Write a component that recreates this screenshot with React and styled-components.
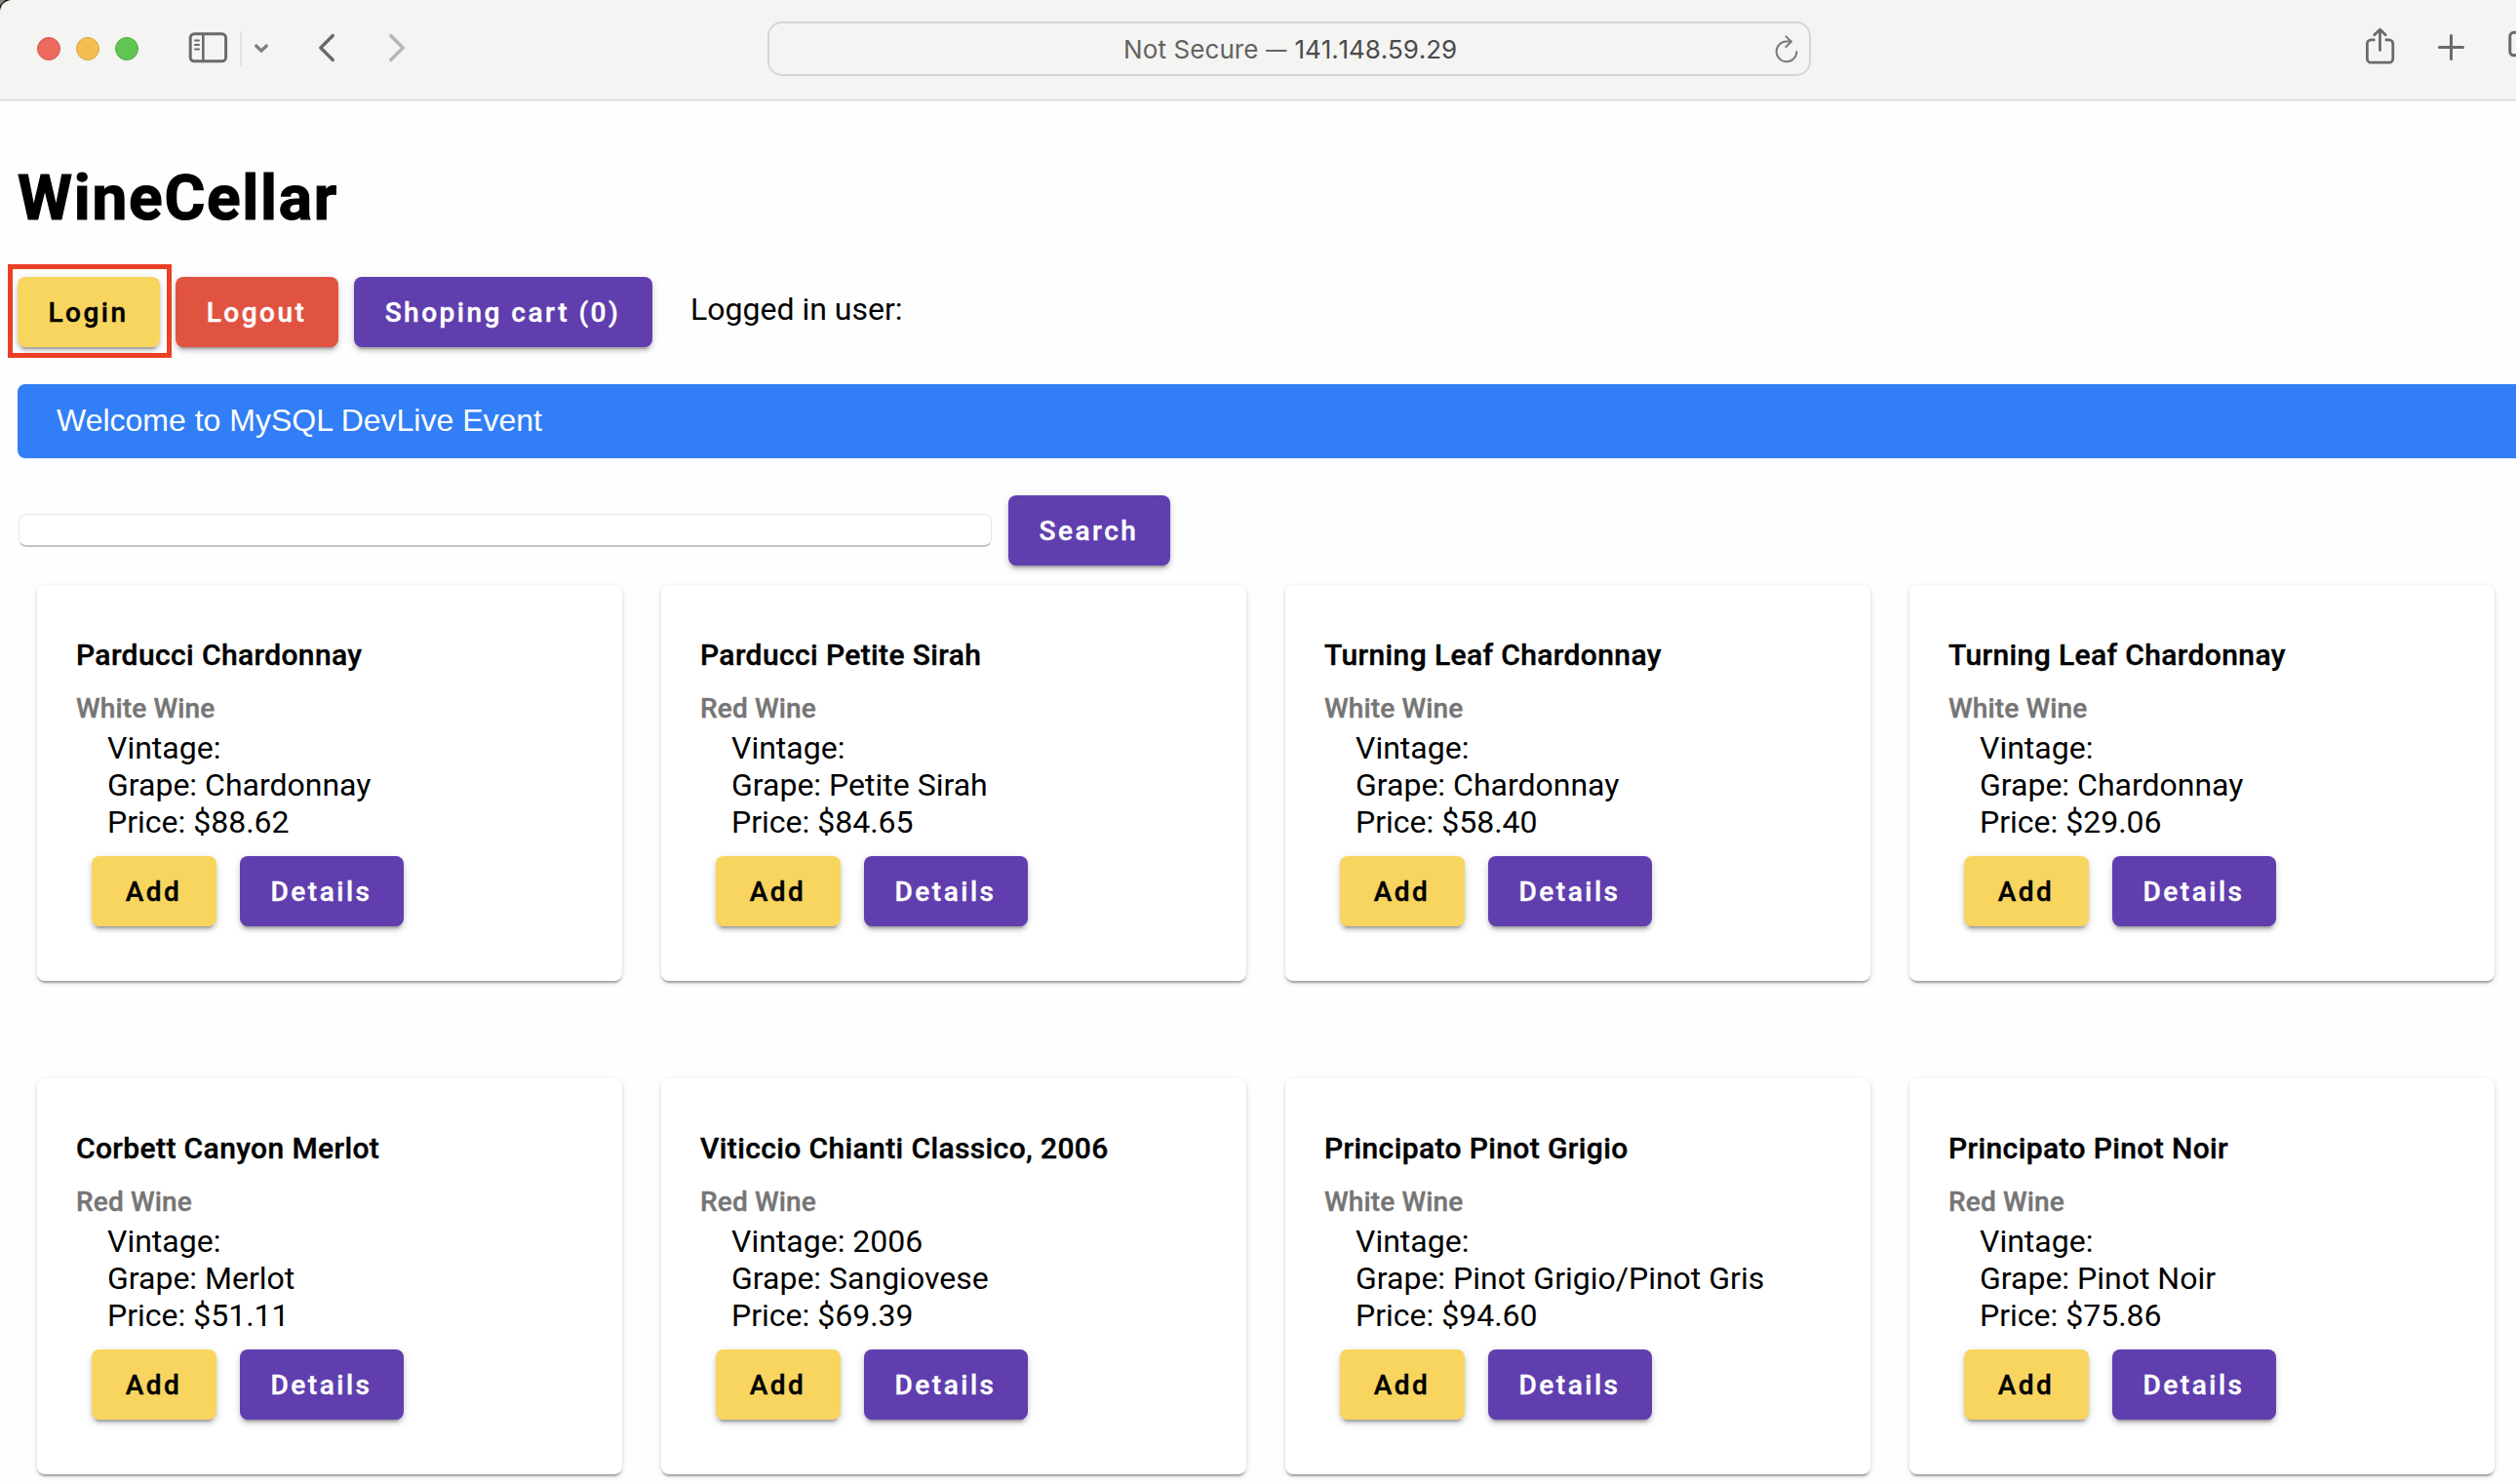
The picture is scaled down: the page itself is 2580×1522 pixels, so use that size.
import React from "react";
import styled, { createGlobalStyle } from "styled-components";

const GlobalStyle = createGlobalStyle`
  *, *::before, *::after { box-sizing: border-box; }
  html, body { margin: 0; background: #fff; overflow: hidden; }
  body { font-family: Roboto, "Liberation Sans", sans-serif; color: #000; font-size: 32px; }
`;

const Window = styled.div`
  width: 2580px;
  height: 1522px;
  overflow: hidden;
  display: flex;
  flex-direction: column;
  background: #fefefe;
`;

const Backdrop = styled.div`
  background: linear-gradient(135deg, #8a877c 0 3px, #000 5px);
`;

const Toolbar = styled.header`
  height: 104px;
  flex: none;
  display: flex;
  align-items: flex-start;
  background: #f4f4f2;
  border-bottom: 1px solid #ececec;
  box-shadow: inset 0 -1px 0 #d5d5d6;
  border-top-left-radius: 12px;
`;

const Lights = styled.div`
  display: flex;
  gap: 16px;
  padding: 38px 0 0 38px;
`;

const Light = styled.span`
  width: 24px;
  height: 24px;
  border-radius: 50%;
  background: ${(p) => p.$fill};
  border: 1px solid ${(p) => p.$edge};
`;

const Icon = styled.svg`
  flex: none;
  display: block;
  width: ${(p) => p.$w}px;
  height: 102px;
  margin-left: ${(p) => p.$ml || 0}px;
  fill: none;
  stroke: ${(p) => p.$color || "#6a6a68"};
  stroke-width: ${(p) => p.$sw || 3};
  stroke-linecap: round;
  stroke-linejoin: round;
`;

const Separator = styled.span`
  width: 2px;
  height: 36px;
  margin: 32px 0 0 12px;
  background: #e2e2e1;
`;

const AddressBar = styled.div`
  width: 1070px;
  height: 56px;
  margin: 22px 0 0 370px;
  border: 2px solid #d6d6d4;
  border-radius: 15px;
  display: flex;
  align-items: center;
  font-family: Inter, "Liberation Sans", sans-serif;
  font-size: 26px;
  letter-spacing: 0.1px;
  line-height: 32px;
  color: #636361;
  white-space: pre;
`;

const AddressText = styled.span`
  margin-left: 363px;
  padding-top: 2px;
  width: 340px;
  flex: none;
`;

const Dash = styled.span`
  display: inline-block;
  transform: scaleX(0.82);
  transform-origin: left;
`;

const Host = styled.span`
  margin-left: -4px;
  color: #4a4a49;
  font-kerning: none;
  letter-spacing: -0.1px;
`;

const Page = styled.main`
  flex: 1;
  padding-left: 18px;
`;

const Heading = styled.h1`
  margin: 62px 0 0;
  height: 76px;
  font-size: 64px;
  font-weight: 700;
  line-height: 76px;
  letter-spacing: 1.75px;
  -webkit-text-stroke: 1.2px #000;
`;

const Actions = styled.div`
  display: flex;
  gap: 16px;
  margin-top: 42px;
  height: 72px;
`;

const Button = styled.button`
  flex: none;
  height: 72px;
  width: ${(p) => p.$w}px;
  padding: 1px 1px 0 0;
  border: 0;
  border-radius: 8px;
  background: ${(p) => p.$bg};
  color: ${(p) => p.$fg || "#fff"};
  font: 500 28px/71px Roboto, sans-serif;
  letter-spacing: 2.5px;
  -webkit-text-stroke: 0.4px currentColor;
  white-space: nowrap;
  box-shadow: 0 6px 2px -4px rgba(0, 0, 0, 0.2), 0 4px 4px 0 rgba(0, 0, 0, 0.14),
    0 2px 10px 0 rgba(0, 0, 0, 0.12);
`;

const Highlighted = styled.div`
  position: relative;
  &::after {
    content: "";
    position: absolute;
    left: -10.5px;
    top: -13px;
    width: 168px;
    height: 96px;
    border: 5px solid #eb3f26;
  }
`;

const UserLabel = styled.span`
  margin: 14px 0 0 23px;
  line-height: 38px;
`;

const Banner = styled.div`
  height: 76px;
  margin-top: 38px;
  padding-left: 40px;
  border-radius: 8px 0 0 8px;
  background: #317ef6;
  color: #fff;
  font: 32px/74px "Liberation Sans", Arial, sans-serif;
`;

const SearchRow = styled.div`
  display: flex;
  align-items: center;
  gap: 17px;
  margin-top: 38px;
  height: 72px;
`;

const SearchInput = styled.input`
  width: 998px;
  height: 34px;
  margin: 0 0 0 1px;
  padding: 0;
  border: 1px solid #e6e6e7;
  border-bottom: 2px solid #c1c3c4;
  border-radius: 8px;
  background: #fff;
  outline: none;
`;

const Grid = styled.div`
  display: grid;
  grid-template-columns: repeat(4, 600px);
  gap: 100px 40px;
  padding: 20px 0 0 20px;
`;

const Card = styled.article`
  height: 406px;
  padding: 52px 40px 0;
  border-radius: 8px;
  background: #fff;
  box-shadow: 0 4px 2px -2px rgba(0, 0, 0, 0.2), 0 2px 2px 0 rgba(0, 0, 0, 0.14),
    0 2px 6px 0 rgba(0, 0, 0, 0.12);
`;

const Title = styled.h3`
  margin: 0;
  height: 40px;
  font-size: 30px;
  font-weight: 500;
  line-height: 40px;
  letter-spacing: 0.38px;
  -webkit-text-stroke: 0.4px currentColor;
  white-space: nowrap;
`;

const Kind = styled.p`
  margin: 13px 0 0;
  height: 43px;
  font-size: 28px;
  font-weight: 500;
  line-height: 44px;
  letter-spacing: 0.15px;
  -webkit-text-stroke: 0.4px currentColor;
  color: #757575;
`;

const Facts = styled.div`
  padding-left: 32px;
  line-height: 38px;
`;

const CardActions = styled.div`
  display: flex;
  gap: 24px;
  margin: 16px 0 0 16px;
`;

const YELLOW = "#f8d55f";
const PURPLE = "#603eae";
const RED = "#e15341";

const wines = [
  ["Parducci Chardonnay", "White Wine", "", "Chardonnay", "88.62"],
  ["Parducci Petite Sirah", "Red Wine", "", "Petite Sirah", "84.65"],
  ["Turning Leaf Chardonnay", "White Wine", "", "Chardonnay", "58.40"],
  ["Turning Leaf Chardonnay", "White Wine", "", "Chardonnay", "29.06"],
  ["Corbett Canyon Merlot", "Red Wine", "", "Merlot", "51.11"],
  ["Viticcio Chianti Classico, 2006", "Red Wine", "2006", "Sangiovese", "69.39"],
  ["Principato Pinot Grigio", "White Wine", "", "Pinot Grigio/Pinot Gris", "94.60"],
  ["Principato Pinot Noir", "Red Wine", "", "Pinot Noir", "75.86"],
];

function WineCard({ wine }) {
  const [name, kind, vintage, grape, price] = wine;
  return (
    <Card>
      <Title>{name}</Title>
      <Kind>{kind}</Kind>
      <Facts>
        <div>{`Vintage: ${vintage}`}</div>
        <div>{`Grape: ${grape}`}</div>
        <div>{`Price: $${price}`}</div>
      </Facts>
      <CardActions>
        <Button $w={128} $bg={YELLOW} $fg="#000">Add</Button>
        <Button $w={168} $bg={PURPLE}>Details</Button>
      </CardActions>
    </Card>
  );
}

export default function App() {
  return (
    <Window>
      <GlobalStyle />
      <Backdrop>
        <Toolbar>
          <Lights>
            <Light $fill="#ed6a5e" $edge="#d35549" />
            <Light $fill="#f5bf4f" $edge="#d8a243" />
            <Light $fill="#61c554" $edge="#52a842" />
          </Lights>
          <Icon $w={41} $ml={51} viewBox="193 0 41 102">
            <rect x="195.2" y="34.8" width="36.4" height="28" rx="4" />
            <path d="M208.3 35v28" strokeWidth="2.6" />
            <path d="M200 41.5h4M200 46h4M200 50.5h4" strokeWidth="2" />
          </Icon>
          <Separator />
          <Icon $w={18} $ml={11} $sw={3.2} $color="#7c7c80" viewBox="259 0 18 102">
            <path d="M262.7 47l5.3 5.2 5.3-5.2" />
          </Icon>
          <Icon $w={20} $ml={48} $sw={3.4} viewBox="325 0 20 102">
            <path d="M341.3 36.5L328.8 49l12.5 12.5" />
          </Icon>
          <Icon $w={20} $ml={52} $sw={3.4} $color="#b5b5b4" viewBox="397 0 20 102">
            <path d="M400.7 36.5L413.2 49l-12.5 12.5" />
          </Icon>
          <AddressBar>
            <AddressText>
              Not Secure <Dash>—</Dash> <Host>141.148.59.29</Host>
            </AddressText>
            <Icon $w={26} $ml={327} $sw={2} $color="#7b7b79" viewBox="1819 0 26 102">
              <path d="M1842.4 54a10.4 10.4 0 1 1-10.4-10.6h4.6" />
              <path d="M1831.4 38.4l5.4 5.3-5.4 5.3" />
            </Icon>
          </AddressBar>
          <Icon $w={33} $ml={567} $sw={2.8} viewBox="2424 0 33 102">
            <path d="M2435.4 40.8h-4a4 4 0 0 0-4 4v15.4a4 4 0 0 0 4 4h18.4a4 4 0 0 0 4-4V44.8a4 4 0 0 0-4-4h-4" strokeLinecap="butt" />
            <path d="M2440.5 51.5V30.8M2434.8 35.8l5.7-5.6 5.7 5.6" />
          </Icon>
          <Icon $w={31} $ml={41} $sw={3} viewBox="2498 0 31 102">
            <path d="M2501.5 48.5h24M2513.5 36.5v24" />
          </Icon>
          <Icon $w={10} $ml={41} $sw={3} viewBox="2570 0 10 102">
            <rect x="2573.8" y="33.3" width="24" height="23.5" rx="4" />
          </Icon>
        </Toolbar>
      </Backdrop>
      <Page>
        <Heading>WineCellar</Heading>
        <Actions>
          <Highlighted>
            <Button $w={146} $bg={YELLOW} $fg="#000">Login</Button>
          </Highlighted>
          <Button $w={167} $bg={RED}>Logout</Button>
          <Button $w={306} $bg={PURPLE}>Shoping cart (0)</Button>
          <UserLabel>Logged in user:</UserLabel>
        </Actions>
        <Banner>Welcome to MySQL DevLive Event</Banner>
        <SearchRow>
          <SearchInput />
          <Button $w={166} $bg={PURPLE}>Search</Button>
        </SearchRow>
        <Grid>
          {wines.map((wine, i) => (
            <WineCard key={i} wine={wine} />
          ))}
        </Grid>
      </Page>
    </Window>
  );
}
